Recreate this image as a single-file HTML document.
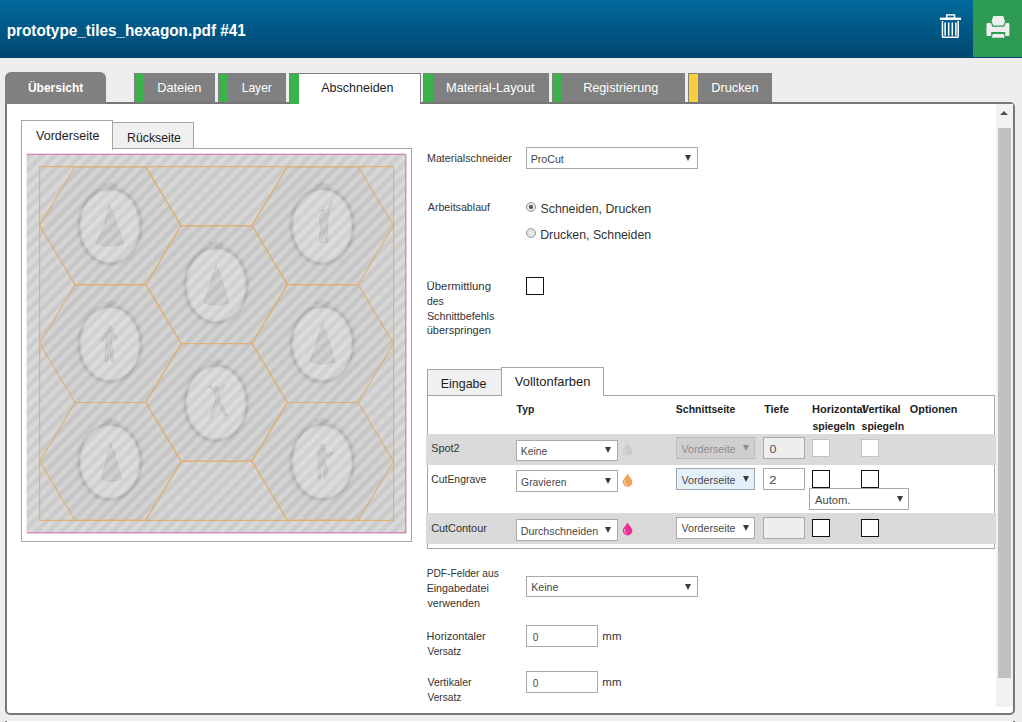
<!DOCTYPE html>
<html><head><meta charset="utf-8"><title>prototype_tiles_hexagon.pdf #41</title>
<style>
html,body{margin:0;padding:0}
body{width:1022px;height:722px;overflow:hidden;background:#eeeeee;position:relative;font-family:"Liberation Sans",sans-serif}
div,span{box-sizing:border-box}
.a{position:absolute}
.t{position:absolute;white-space:pre;transform-origin:0 50%;font-family:"Liberation Sans",sans-serif}
.hdr{left:0;top:0;width:1022px;height:58px;background:linear-gradient(#006b9c,#005a88 45%,#00476f)}
.go{left:973px;top:0;width:49px;height:57px;background:#2d9b51}
.tab{background:#808080}
.bar{background:#39b34a}
.panel{left:5px;top:102px;width:1010px;height:613px;border:2px solid #777;border-radius:0 5px 5px 5px;background:#fff}
.sel{background:#fff;border:1px solid #a9a9a9}
.arr{width:0;height:0;margin-left:-0.4px;border-left:3.9px solid transparent;border-right:3.9px solid transparent;border-top:6.2px solid #3c3c3c}
.cb{width:18px;height:18px;border:1.3px solid #111;background:#fff}
.row{left:426px;width:570px;background:#dadada}
</style></head><body>
<div class="a hdr"></div>
<div class="a go"></div>
<!-- trash icon -->
<svg class="a" style="left:938px;top:12px" width="26" height="28" viewBox="938 12 26 28">
<rect x="946.7" y="14.9" width="7.8" height="3.4" fill="none" stroke="#fff" stroke-width="1.4"/>
<rect x="939.9" y="17.6" width="21.1" height="2.4" fill="#fff"/>
<path d="M942.45,20.9 V36.2 q0,1.1 1.1,1.1 H957.1 q1.1,0 1.1,-1.1 V20.9" fill="none" stroke="#fff" stroke-width="1.5"/>
<path d="M945.1,22.6 V35.8 M948.7,22.6 V35.8 M952.3,22.6 V35.8 M955.9,22.6 V35.8" stroke="#fff" stroke-width="1.5"/>
</svg>
<!-- printer icon -->
<svg class="a" style="left:984px;top:13px" width="28" height="27" viewBox="984 13 28 27">
<path d="M986.5,24.1 q0,-1.1 1.1,-1.1 h20.7 q1.1,0 1.1,1.1 v10.8 q0,1.1 -1.1,1.1 h-3.1 v-4 h-14 v4 h-3.6 q-1.1,0 -1.1,-1.1z" fill="#eeeeee"/>
<path d="M993.5,16 h9.6 l1.8,5.6 -1.6,3.9 h-10 l-1.6,-3.9z" fill="#eeeeee" stroke="#2d9b51" stroke-width="2.4" paint-order="stroke"/>
<path d="M993.5,16 h9.6 l1.8,5.6 h-13.2z" fill="#eeeeee"/>
<path d="M992.7,34 h11 l1,3.8 h-13z" fill="#eeeeee"/>
</svg>

<!-- panel -->
<div class="a panel"></div>
<!-- main tabs -->
<div class="a tab" style="left:5px;top:72px;width:101px;height:32px;border-radius:6px 6px 0 0"></div>
<div class="a tab" style="left:134px;top:73px;width:81px;height:29px"></div><div class="a bar" style="left:135px;top:74px;width:9px;height:27.5px"></div>
<div class="a tab" style="left:218px;top:73px;width:68px;height:29px"></div><div class="a bar" style="left:219px;top:74px;width:9px;height:27.5px"></div>
<div class="a" style="left:289px;top:73px;width:131.5px;height:31px;background:#fff;border:1px solid #808080;border-bottom:none"></div><div class="a bar" style="left:290px;top:74px;width:9px;height:30px"></div>
<div class="a tab" style="left:423px;top:73px;width:126px;height:29px"></div><div class="a bar" style="left:424px;top:74px;width:9px;height:27.5px"></div>
<div class="a tab" style="left:551.5px;top:73px;width:133.5px;height:29px"></div><div class="a bar" style="left:552.7px;top:74px;width:9.3px;height:27.5px"></div>
<div class="a tab" style="left:688px;top:73px;width:84.2px;height:29px"></div><div class="a bar" style="left:689px;top:74px;width:9.3px;height:27.5px;background:#f8cd3e"></div>

<!-- scrollbar -->
<div class="a" style="left:996px;top:104px;width:17px;height:603px;background:#f1f1f1"></div>
<div class="a" style="left:998px;top:128px;width:13px;height:550px;background:#c1c1c1"></div>
<div class="a" style="left:1000.2px;top:110.8px;width:0;height:0;border-left:4.3px solid transparent;border-right:4.3px solid transparent;border-bottom:4.3px solid #505050"></div>

<!-- left preview box -->
<div class="a" style="left:21px;top:148px;width:391px;height:394px;border:1px solid #a5a5a5;background:#fff"></div>
<div class="a" style="left:112.3px;top:122px;width:82px;height:27px;border:1px solid #a5a5a5;background:#f0f0f0"></div>
<div class="a" style="left:21px;top:120px;width:92.3px;height:30px;border:1px solid #a5a5a5;border-bottom:none;background:#fff"></div>
<svg style="position:absolute;left:26px;top:153px" width="382" height="382" viewBox="26 153 382 382">
<defs>
<pattern id="st" width="9.02" height="9" patternUnits="userSpaceOnUse" patternTransform="rotate(45) translate(6.9 0)">
<rect x="0" y="-1" width="4.51" height="11" fill="#fff"/>
</pattern>
<filter id="b1" x="-20%" y="-20%" width="140%" height="140%"><feGaussianBlur stdDeviation="1.0"/></filter>
<filter id="b2" x="-30%" y="-30%" width="160%" height="160%"><feGaussianBlur stdDeviation="0.55"/></filter>
<clipPath id="cl"><rect x="39.6" y="166.7" width="354.0" height="353.7"/></clipPath>
</defs>
<rect x="26.6" y="153.7" width="379.8" height="379.7" fill="#cdcdcd"/>
<rect x="39.6" y="166.7" width="354.0" height="353.7" fill="rgba(0,0,0,0.012)"/>
<g clip-path="url(#cl)"><polygon points="39.6,225.6 75.0,166.7 145.8,166.7 181.2,225.6 145.8,284.6 75.0,284.6" fill="rgba(0,0,0,0.018)"/>
<polygon points="252.0,225.6 287.4,166.7 358.2,166.7 393.6,225.6 358.2,284.6 287.4,284.6" fill="rgba(0,0,0,0.018)"/>
<polygon points="39.6,343.5 75.0,284.6 145.8,284.6 181.2,343.5 145.8,402.5 75.0,402.5" fill="rgba(0,0,0,0.018)"/>
<polygon points="252.0,343.5 287.4,284.6 358.2,284.6 393.6,343.5 358.2,402.5 287.4,402.5" fill="rgba(0,0,0,0.018)"/>
<polygon points="39.6,461.4 75.0,402.5 145.8,402.5 181.2,461.4 145.8,520.4 75.0,520.4" fill="rgba(0,0,0,0.018)"/>
<polygon points="252.0,461.4 287.4,402.5 358.2,402.5 393.6,461.4 358.2,520.4 287.4,520.4" fill="rgba(0,0,0,0.018)"/>
<polygon points="145.8,284.6 181.2,225.6 252.0,225.6 287.4,284.6 252.0,343.5 181.2,343.5" fill="rgba(0,0,0,0.018)"/>
<polygon points="145.8,402.5 181.2,343.6 252.0,343.6 287.4,402.5 252.0,461.4 181.2,461.4" fill="rgba(0,0,0,0.018)"/>
</g>
<g transform="translate(109.9,226.1)">
<ellipse rx="30.9" ry="37.5" fill="none" stroke="#969696" stroke-width="3.6" opacity="0.5" filter="url(#b1)"/>
<ellipse rx="29.8" ry="36.4" fill="#f6f6f6" opacity="0.24"/>
<path d="M-8,-40 q2,-5 5,-2 q3,-5 6,0 q3,-3 5,2 q-8,3 -16,0z" fill="#a8a8a8" opacity="0.5" filter="url(#b2)"/>
<path d="M-1,-21 l2.5,4 l1,2.5 l-1,2 l3,2 l1,6 l3,6 l5,16 q-13,5 -27,0 l6,-15 l3,-7 l0.5,-6 l2,-2.5 l-0.5,-3z" fill="#909090" opacity="0.22" filter="url(#b2)"/>
<path d="M-1,-21 l2.5,4 l1,2.5 l-1,2 l3,2 l1,6 l3,6 l5,16 q-13,5 -27,0 l6,-15 l3,-7 l0.5,-6 l2,-2.5 l-0.5,-3z" fill="none" stroke="#888" stroke-width="0.7" opacity="0.3"/>
</g>
<g transform="translate(322.3,226.1)">
<ellipse rx="30.9" ry="37.5" fill="none" stroke="#969696" stroke-width="3.6" opacity="0.5" filter="url(#b1)"/>
<ellipse rx="29.8" ry="36.4" fill="#f6f6f6" opacity="0.24"/>
<path d="M-8,-40 q2,-5 5,-2 q3,-5 6,0 q3,-3 5,2 q-8,3 -16,0z" fill="#a8a8a8" opacity="0.5" filter="url(#b2)"/>
<path d="M1,-17 a2.3,2.3 0 1 1 -0.1,0 M-2,-12 l5,0 l2,-4 l4,-9 l1.5,0.5 l-3.5,10 l-1,6 l-1,9 l1,16 l-3,0 l-1,-12 l-2,12 l-3,0 l1,-17 l-1,-8z" fill="#909090" opacity="0.22" filter="url(#b2)"/>
<path d="M1,-17 a2.3,2.3 0 1 1 -0.1,0 M-2,-12 l5,0 l2,-4 l4,-9 l1.5,0.5 l-3.5,10 l-1,6 l-1,9 l1,16 l-3,0 l-1,-12 l-2,12 l-3,0 l1,-17 l-1,-8z" fill="none" stroke="#888" stroke-width="0.7" opacity="0.3"/>
</g>
<g transform="translate(109.9,344.0)">
<ellipse rx="30.9" ry="37.5" fill="none" stroke="#969696" stroke-width="3.6" opacity="0.5" filter="url(#b1)"/>
<ellipse rx="29.8" ry="36.4" fill="#f6f6f6" opacity="0.24"/>
<path d="M-8,-40 q2,-5 5,-2 q3,-5 6,0 q3,-3 5,2 q-8,3 -16,0z" fill="#a8a8a8" opacity="0.5" filter="url(#b2)"/>
<path d="M0,-18 a2.3,2.3 0 1 1 -0.1,0 M-3,-13 l6,0 l4,7 l-2,1.5 l-3,-4 l0,10 l2,16 l-3,0 l-1.5,-13 l-1.5,13 l-3,0 l1,-16 l0,-9 l-3,5 l-2,-1z" fill="#909090" opacity="0.22" filter="url(#b2)"/>
<path d="M0,-18 a2.3,2.3 0 1 1 -0.1,0 M-3,-13 l6,0 l4,7 l-2,1.5 l-3,-4 l0,10 l2,16 l-3,0 l-1.5,-13 l-1.5,13 l-3,0 l1,-16 l0,-9 l-3,5 l-2,-1z" fill="none" stroke="#888" stroke-width="0.7" opacity="0.3"/>
</g>
<g transform="translate(322.3,344.0)">
<ellipse rx="30.9" ry="37.5" fill="none" stroke="#969696" stroke-width="3.6" opacity="0.5" filter="url(#b1)"/>
<ellipse rx="29.8" ry="36.4" fill="#f6f6f6" opacity="0.24"/>
<path d="M-8,-40 q2,-5 5,-2 q3,-5 6,0 q3,-3 5,2 q-8,3 -16,0z" fill="#a8a8a8" opacity="0.5" filter="url(#b2)"/>
<path d="M0,-20 l2,3 l0,3 l2.5,2 l0.5,6 l2.5,6 l5,18 q-12,4 -25,0 l6,-17 l2.5,-7 l0.5,-6 l2,-2 l0,-3z" fill="#909090" opacity="0.22" filter="url(#b2)"/>
<path d="M0,-20 l2,3 l0,3 l2.5,2 l0.5,6 l2.5,6 l5,18 q-12,4 -25,0 l6,-17 l2.5,-7 l0.5,-6 l2,-2 l0,-3z" fill="none" stroke="#888" stroke-width="0.7" opacity="0.3"/>
</g>
<g transform="translate(109.9,461.9)">
<ellipse rx="30.9" ry="37.5" fill="none" stroke="#969696" stroke-width="3.6" opacity="0.5" filter="url(#b1)"/>
<ellipse rx="29.8" ry="36.4" fill="#f6f6f6" opacity="0.24"/>
<path d="M-8,-40 q2,-5 5,-2 q3,-5 6,0 q3,-3 5,2 q-8,3 -16,0z" fill="#a8a8a8" opacity="0.5" filter="url(#b2)"/>
<path d="M0,-19 l2,3 l0,2.5 l2.5,2 l1,6 l2,6 l4,17 q-10,4 -20,0 l4,-17 l2,-6 l0.5,-6 l2,-2 l0,-2.5z" fill="#909090" opacity="0.22" filter="url(#b2)"/>
<path d="M0,-19 l2,3 l0,2.5 l2.5,2 l1,6 l2,6 l4,17 q-10,4 -20,0 l4,-17 l2,-6 l0.5,-6 l2,-2 l0,-2.5z" fill="none" stroke="#888" stroke-width="0.7" opacity="0.3"/>
</g>
<g transform="translate(322.3,461.9)">
<ellipse rx="30.9" ry="37.5" fill="none" stroke="#969696" stroke-width="3.6" opacity="0.5" filter="url(#b1)"/>
<ellipse rx="29.8" ry="36.4" fill="#f6f6f6" opacity="0.24"/>
<path d="M-8,-40 q2,-5 5,-2 q3,-5 6,0 q3,-3 5,2 q-8,3 -16,0z" fill="#a8a8a8" opacity="0.5" filter="url(#b2)"/>
<path d="M0,-18 a2.3,2.3 0 1 1 -0.1,0 M-2.5,-13 l5,0 l3,6 l4,-3 l1,1.5 l-5,4.5 l-3,-3 l0,7 l3,7 l-2,10 l-2.5,0 l1,-9 l-3,-6 l-1,15 l-2.5,0 l0.5,-20 l-1,-7z" fill="#909090" opacity="0.22" filter="url(#b2)"/>
<path d="M0,-18 a2.3,2.3 0 1 1 -0.1,0 M-2.5,-13 l5,0 l3,6 l4,-3 l1,1.5 l-5,4.5 l-3,-3 l0,7 l3,7 l-2,10 l-2.5,0 l1,-9 l-3,-6 l-1,15 l-2.5,0 l0.5,-20 l-1,-7z" fill="none" stroke="#888" stroke-width="0.7" opacity="0.3"/>
</g>
<g transform="translate(216.1,285.1)">
<ellipse rx="30.9" ry="37.5" fill="none" stroke="#969696" stroke-width="3.6" opacity="0.5" filter="url(#b1)"/>
<ellipse rx="29.8" ry="36.4" fill="#f6f6f6" opacity="0.24"/>
<path d="M-8,-40 q2,-5 5,-2 q3,-5 6,0 q3,-3 5,2 q-8,3 -16,0z" fill="#a8a8a8" opacity="0.5" filter="url(#b2)"/>
<path d="M0,-20 l2,3 l0,3 l2.5,2 l0.5,6 l2.5,6 l5,18 q-12,4 -25,0 l6,-17 l2.5,-7 l0.5,-6 l2,-2 l0,-3z" fill="#909090" opacity="0.22" filter="url(#b2)"/>
<path d="M0,-20 l2,3 l0,3 l2.5,2 l0.5,6 l2.5,6 l5,18 q-12,4 -25,0 l6,-17 l2.5,-7 l0.5,-6 l2,-2 l0,-3z" fill="none" stroke="#888" stroke-width="0.7" opacity="0.3"/>
</g>
<g transform="translate(216.1,403.0)">
<ellipse rx="30.9" ry="37.5" fill="none" stroke="#969696" stroke-width="3.6" opacity="0.5" filter="url(#b1)"/>
<ellipse rx="29.8" ry="36.4" fill="#f6f6f6" opacity="0.24"/>
<path d="M-8,-40 q2,-5 5,-2 q3,-5 6,0 q3,-3 5,2 q-8,3 -16,0z" fill="#a8a8a8" opacity="0.5" filter="url(#b2)"/>
<path d="M0,-17 a2.2,2.2 0 1 1 -0.1,0 M-2,-12 l4,0 l6,-7 l1.5,1.5 l-6,8 l0,7 l8,15 l-2.5,1 l-7,-12 l-6,13 l-2.5,-1 l6,-16 l0,-6 l-7,-8 l1.5,-1.5z" fill="#909090" opacity="0.22" filter="url(#b2)"/>
<path d="M0,-17 a2.2,2.2 0 1 1 -0.1,0 M-2,-12 l4,0 l6,-7 l1.5,1.5 l-6,8 l0,7 l8,15 l-2.5,1 l-7,-12 l-6,13 l-2.5,-1 l6,-16 l0,-6 l-7,-8 l1.5,-1.5z" fill="none" stroke="#888" stroke-width="0.7" opacity="0.3"/>
</g>

<rect x="26.6" y="153.7" width="379.8" height="379.7" fill="url(#st)" opacity="0.23"/>
<g clip-path="url(#cl)" fill="none" stroke="#e1ac6c" stroke-width="1.1" opacity="0.9">
<polygon points="39.6,225.6 75.0,166.7 145.8,166.7 181.2,225.6 145.8,284.6 75.0,284.6"/><polygon points="252.0,225.6 287.4,166.7 358.2,166.7 393.6,225.6 358.2,284.6 287.4,284.6"/><polygon points="39.6,343.5 75.0,284.6 145.8,284.6 181.2,343.5 145.8,402.5 75.0,402.5"/><polygon points="252.0,343.5 287.4,284.6 358.2,284.6 393.6,343.5 358.2,402.5 287.4,402.5"/><polygon points="39.6,461.4 75.0,402.5 145.8,402.5 181.2,461.4 145.8,520.4 75.0,520.4"/><polygon points="252.0,461.4 287.4,402.5 358.2,402.5 393.6,461.4 358.2,520.4 287.4,520.4"/><polygon points="145.8,166.7 181.2,107.8 252.0,107.8 287.4,166.7 252.0,225.6 181.2,225.6"/><polygon points="145.8,284.6 181.2,225.6 252.0,225.6 287.4,284.6 252.0,343.5 181.2,343.5"/><polygon points="145.8,402.5 181.2,343.6 252.0,343.6 287.4,402.5 252.0,461.4 181.2,461.4"/><polygon points="145.8,520.4 181.2,461.4 252.0,461.4 287.4,520.4 252.0,579.4 181.2,579.4"/>
</g>
<rect x="39.6" y="166.7" width="354.0" height="353.7" fill="none" stroke="#e1ac6c" stroke-width="1.2" opacity="0.9"/>
<path d="M26.6,154.29999999999998 H405.79999999999995 V532.8 H26.6" fill="none" stroke="#dc72b4" stroke-width="1"/>
</svg>

<!-- form controls -->
<div class="a sel" style="left:526px;top:147px;width:172px;height:22px"></div><div class="a arr" style="left:685px;top:155px"></div>
<!-- radios -->
<div class="a" style="left:526px;top:202px;width:10.2px;height:10.2px;border-radius:50%;border:1px solid #959595;background:radial-gradient(#595959 0,#595959 30%,#e9e9e9 42%,#e0e0e0 100%)"></div>
<div class="a" style="left:526px;top:227.9px;width:10.2px;height:10.2px;border-radius:50%;border:1px solid #9a9a9a;background:radial-gradient(#eaeaea,#dedede)"></div>
<div class="a cb" style="left:526px;top:277px"></div>

<!-- inner tabs right -->
<div class="a" style="left:427px;top:394.5px;width:568px;height:154px;border:1px solid #a5a5a5;background:#fff"></div>
<div class="a" style="left:427px;top:368.5px;width:74.5px;height:27px;border:1px solid #a5a5a5;background:#f0f0f0"></div>
<div class="a" style="left:500.5px;top:367px;width:103.5px;height:29px;border:1px solid #a5a5a5;border-bottom:none;background:#fff"></div>
<!-- rows -->
<div class="a row" style="top:434.2px;height:30.6px"></div>
<div class="a row" style="top:513.2px;height:30.6px"></div>
<!-- row1 -->
<div class="a sel" style="left:516px;top:440px;width:102px;height:21px"></div><div class="a arr" style="left:605.5px;top:447px"></div>
<div class="a sel" style="left:676px;top:437px;width:79px;height:22px;background:#cfcfcf;border-color:#bdbdbd"></div><div class="a arr" style="left:743.2px;top:445px;border-top-color:#8a8a8a"></div>
<div class="a sel" style="left:763px;top:437px;width:42px;height:22px;background:#eeeeee;border-color:#a9a9a9"></div>
<div class="a cb" style="left:812px;top:439px;border:1px solid #c4c4c4"></div>
<div class="a cb" style="left:861px;top:439px;border:1px solid #c4c4c4"></div>
<!-- row2 -->
<div class="a sel" style="left:516px;top:470px;width:102px;height:22px"></div><div class="a arr" style="left:605.5px;top:478px"></div>
<div class="a sel" style="left:676px;top:468px;width:79px;height:22px;background:#e4f0fa;border-color:#a0a6ad"></div><div class="a arr" style="left:743.2px;top:476px"></div>
<div class="a sel" style="left:763px;top:468px;width:42px;height:22px"></div>
<div class="a cb" style="left:812px;top:470px"></div>
<div class="a cb" style="left:861px;top:470px"></div>
<div class="a sel" style="left:809.2px;top:488.3px;width:99.4px;height:21.3px"></div><div class="a arr" style="left:897.2px;top:496.3px"></div>
<!-- row3 -->
<div class="a sel" style="left:516px;top:519px;width:102px;height:22px"></div><div class="a arr" style="left:605.5px;top:527px"></div>
<div class="a sel" style="left:676px;top:517px;width:79px;height:22px"></div><div class="a arr" style="left:743.2px;top:524.5px"></div>
<div class="a sel" style="left:763px;top:517px;width:42px;height:22px;background:#eeeeee"></div>
<div class="a cb" style="left:812px;top:518.6px"></div>
<div class="a cb" style="left:861px;top:518.6px"></div>
<!-- drops -->
<svg class="a" style="left:621px;top:441px" width="14" height="100" viewBox="621 441 14 100">
<path d="M627.6,442.5 C629.2,446.1 632.4,448.4 632.4,451.0 A4.8,4.8 0 0 1 622.8000000000001,451.0 C622.8000000000001,448.4 626.0,446.1 627.6,442.5Z" fill="#cbcbcb"/><path d="M624.5,449.5 q-0.4,3.6 2.4,4.8" fill="none" stroke="#dddddd" stroke-width="0.9" stroke-linecap="round"/>
<path d="M627.6,473.5 C629.2,477.1 632.4,479.4 632.4,482.0 A4.8,4.8 0 0 1 622.8000000000001,482.0 C622.8000000000001,479.4 626.0,477.1 627.6,473.5Z" fill="#f0a058"/><path d="M624.5,480.5 q-0.4,3.6 2.4,4.8" fill="none" stroke="#fbe0c4" stroke-width="0.9" stroke-linecap="round"/>
<path d="M627.6,522.2 C629.2,525.8000000000001 632.4,528.1 632.4,530.7 A4.8,4.8 0 0 1 622.8000000000001,530.7 C622.8000000000001,528.1 626.0,525.8000000000001 627.6,522.2Z" fill="#ec2d98"/><path d="M624.5,529.2 q-0.4,3.6 2.4,4.8" fill="none" stroke="#f9b9dc" stroke-width="0.9" stroke-linecap="round"/>
</svg>
<!-- bottom form -->
<div class="a sel" style="left:526px;top:576px;width:172px;height:21px"></div><div class="a arr" style="left:685px;top:583.5px"></div>
<div class="a sel" style="left:526px;top:625.4px;width:72.3px;height:21.3px"></div>
<div class="a sel" style="left:526px;top:671.4px;width:72.3px;height:21.3px"></div>

<svg class="a" style="left:0;top:0" width="1022" height="722" font-family="Liberation Sans, sans-serif">
<text x="6.64" y="36" font-size="15.6" fill="#fff" font-weight="700" textLength="239.24" lengthAdjust="spacingAndGlyphs">prototype_tiles_hexagon.pdf #41</text>
<text x="27.91" y="92" font-size="12.2" fill="#fff" font-weight="700" textLength="55.40" lengthAdjust="spacingAndGlyphs">Übersicht</text>
<text x="157.15" y="92" font-size="12.2" fill="#fff" textLength="44.18" lengthAdjust="spacingAndGlyphs">Dateien</text>
<text x="241.71" y="92" font-size="12.2" fill="#fff" textLength="30.15" lengthAdjust="spacingAndGlyphs">Layer</text>
<text x="321.30" y="92" font-size="12.2" fill="#1c1c1c" textLength="72.20" lengthAdjust="spacingAndGlyphs">Abschneiden</text>
<text x="445.95" y="92" font-size="12.2" fill="#fff" textLength="88.55" lengthAdjust="spacingAndGlyphs">Material-Layout</text>
<text x="583.16" y="92" font-size="12.2" fill="#fff" textLength="75.25" lengthAdjust="spacingAndGlyphs">Registrierung</text>
<text x="711.26" y="92" font-size="12.2" fill="#fff" textLength="47.47" lengthAdjust="spacingAndGlyphs">Drucken</text>
<text x="36.05" y="140" font-size="12.2" fill="#1c1c1c" textLength="63.30" lengthAdjust="spacingAndGlyphs">Vorderseite</text>
<text x="127.09" y="142" font-size="12.2" fill="#1c1c1c" textLength="53.84" lengthAdjust="spacingAndGlyphs">Rückseite</text>
<text x="426.94" y="162" font-size="11.2" fill="#333" textLength="84.84" lengthAdjust="spacingAndGlyphs">Materialschneider</text>
<text x="530.64" y="163" font-size="11.2" fill="#484848" textLength="33.22" lengthAdjust="spacingAndGlyphs">ProCut</text>
<text x="427.80" y="211" font-size="11.2" fill="#333" textLength="62.16" lengthAdjust="spacingAndGlyphs">Arbeitsablauf</text>
<text x="540.57" y="213" font-size="12.7" fill="#333" textLength="110.62" lengthAdjust="spacingAndGlyphs">Schneiden, Drucken</text>
<text x="540.13" y="239" font-size="12.7" fill="#333" textLength="111.06" lengthAdjust="spacingAndGlyphs">Drucken, Schneiden</text>
<text x="426.54" y="290" font-size="11.2" fill="#333" textLength="64.45" lengthAdjust="spacingAndGlyphs">Übermittlung</text>
<text x="426.98" y="305" font-size="11.2" fill="#333" textLength="16.79" lengthAdjust="spacingAndGlyphs">des</text>
<text x="426.92" y="320" font-size="11.2" fill="#333" textLength="67.46" lengthAdjust="spacingAndGlyphs">Schnittbefehls</text>
<text x="426.66" y="334" font-size="11.2" fill="#333" textLength="64.31" lengthAdjust="spacingAndGlyphs">überspringen</text>
<text x="440.78" y="388" font-size="12.2" fill="#1c1c1c" textLength="45.67" lengthAdjust="spacingAndGlyphs">Eingabe</text>
<text x="514.85" y="386" font-size="12.2" fill="#1c1c1c" textLength="75.59" lengthAdjust="spacingAndGlyphs">Volltonfarben</text>
<text x="516.61" y="413" font-size="11.3" fill="#222" font-weight="700" textLength="17.61" lengthAdjust="spacingAndGlyphs">Typ</text>
<text x="675.82" y="413" font-size="11.3" fill="#222" font-weight="700" textLength="59.64" lengthAdjust="spacingAndGlyphs">Schnittseite</text>
<text x="764.31" y="413" font-size="11.3" fill="#222" font-weight="700" textLength="24.66" lengthAdjust="spacingAndGlyphs">Tiefe</text>
<text x="812.07" y="413" font-size="11.3" fill="#222" font-weight="700" textLength="53.70" lengthAdjust="spacingAndGlyphs">Horizontal</text>
<text x="861.85" y="413" font-size="11.3" fill="#222" font-weight="700" textLength="38.81" lengthAdjust="spacingAndGlyphs">Vertikal</text>
<text x="909.87" y="413" font-size="11.3" fill="#222" font-weight="700" textLength="47.56" lengthAdjust="spacingAndGlyphs">Optionen</text>
<text x="812.48" y="430" font-size="11.3" fill="#222" font-weight="700" textLength="42.53" lengthAdjust="spacingAndGlyphs">spiegeln</text>
<text x="861.58" y="430" font-size="11.3" fill="#222" font-weight="700" textLength="42.53" lengthAdjust="spacingAndGlyphs">spiegeln</text>
<text x="431.21" y="452" font-size="11.2" fill="#333" textLength="28.40" lengthAdjust="spacingAndGlyphs">Spot2</text>
<text x="431.19" y="483" font-size="11.2" fill="#333" textLength="55.06" lengthAdjust="spacingAndGlyphs">CutEngrave</text>
<text x="431.17" y="532" font-size="11.2" fill="#333" textLength="55.71" lengthAdjust="spacingAndGlyphs">CutContour</text>
<text x="520.77" y="455" font-size="11.2" fill="#484848" textLength="26.47" lengthAdjust="spacingAndGlyphs">Keine</text>
<text x="521.09" y="486" font-size="11.2" fill="#484848" textLength="45.54" lengthAdjust="spacingAndGlyphs">Gravieren</text>
<text x="520.74" y="535" font-size="11.2" fill="#484848" textLength="77.41" lengthAdjust="spacingAndGlyphs">Durchschneiden</text>
<text x="681.50" y="453" font-size="11.2" fill="#8c8c8c" textLength="54.06" lengthAdjust="spacingAndGlyphs">Vorderseite</text>
<text x="681.50" y="484" font-size="11.2" fill="#484848" textLength="54.06" lengthAdjust="spacingAndGlyphs">Vorderseite</text>
<text x="681.50" y="532" font-size="11.2" fill="#484848" textLength="54.06" lengthAdjust="spacingAndGlyphs">Vorderseite</text>
<text x="769.56" y="453" font-size="11.2" fill="#555" textLength="6.92" lengthAdjust="spacingAndGlyphs">0</text>
<text x="769.36" y="484" font-size="11.2" fill="#484848" textLength="7.26" lengthAdjust="spacingAndGlyphs">2</text>
<text x="815.00" y="504" font-size="11.2" fill="#484848" textLength="35.41" lengthAdjust="spacingAndGlyphs">Autom.</text>
<text x="426.68" y="577" font-size="11.2" fill="#333" textLength="72.09" lengthAdjust="spacingAndGlyphs">PDF-Felder aus</text>
<text x="426.64" y="592" font-size="11.2" fill="#333" textLength="62.26" lengthAdjust="spacingAndGlyphs">Eingabedatei</text>
<text x="427.50" y="607" font-size="11.2" fill="#333" textLength="52.35" lengthAdjust="spacingAndGlyphs">verwenden</text>
<text x="531.14" y="591" font-size="11.2" fill="#484848" textLength="27.31" lengthAdjust="spacingAndGlyphs">Keine</text>
<text x="426.62" y="640" font-size="11.2" fill="#333" textLength="59.16" lengthAdjust="spacingAndGlyphs">Horizontaler</text>
<text x="427.50" y="655" font-size="11.2" fill="#333" textLength="33.80" lengthAdjust="spacingAndGlyphs">Versatz</text>
<text x="532.64" y="641" font-size="11.2" fill="#484848" textLength="5.65" lengthAdjust="spacingAndGlyphs">0</text>
<text x="602.38" y="640" font-size="11.2" fill="#333" textLength="19.06" lengthAdjust="spacingAndGlyphs">mm</text>
<text x="427.50" y="686" font-size="11.2" fill="#333" textLength="44.07" lengthAdjust="spacingAndGlyphs">Vertikaler</text>
<text x="427.50" y="701" font-size="11.2" fill="#333" textLength="33.80" lengthAdjust="spacingAndGlyphs">Versatz</text>
<text x="532.64" y="687" font-size="11.2" fill="#484848" textLength="5.65" lengthAdjust="spacingAndGlyphs">0</text>
<text x="602.38" y="686" font-size="11.2" fill="#333" textLength="19.06" lengthAdjust="spacingAndGlyphs">mm</text>
</svg>
<div class="a" style="left:5px;top:721px;width:1010px;height:2px;background:#fff;border-left:2px solid #777;border-right:2px solid #777"></div>
</body></html>
